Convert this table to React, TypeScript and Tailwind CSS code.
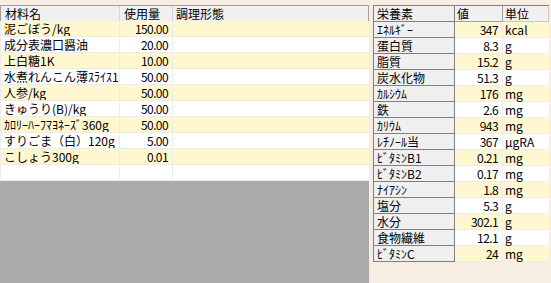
const FONT = "font-['Noto_Sans_CJK_JP','Noto_Sans',sans-serif]";

type Ingredient = { name: string; amount: string; cooking: string };
type Nutrient = { name: string; value: string; unit: string };

const ingredients: Ingredient[] = [
  { name: "泥ごぼう/kg", amount: "150.00", cooking: "" },
  { name: "成分表濃口醤油", amount: "20.00", cooking: "" },
  { name: "上白糖1K", amount: "10.00", cooking: "" },
  { name: "水煮れんこん薄ｽﾗｲｽ1k", amount: "50.00", cooking: "" },
  { name: "人参/kg", amount: "50.00", cooking: "" },
  { name: "きゅうり(B)/kg", amount: "50.00", cooking: "" },
  { name: "ｶﾛﾘｰﾊｰﾌﾏﾖﾈｰｽﾞ360g", amount: "50.00", cooking: "" },
  { name: "すりごま（白）120g", amount: "5.00", cooking: "" },
  { name: "こしょう300g", amount: "0.01", cooking: "" },
  { name: "", amount: "", cooking: "" },
];

const nutrients: Nutrient[] = [
  { name: "ｴﾈﾙｷﾞｰ", value: "347", unit: "kcal" },
  { name: "蛋白質", value: "8.3", unit: "g" },
  { name: "脂質", value: "15.2", unit: "g" },
  { name: "炭水化物", value: "51.3", unit: "g" },
  { name: "ｶﾙｼｳﾑ", value: "176", unit: "mg" },
  { name: "鉄", value: "2.6", unit: "mg" },
  { name: "ｶﾘｳﾑ", value: "943", unit: "mg" },
  { name: "ﾚﾁﾉｰﾙ当", value: "367", unit: "μgRA" },
  { name: "ﾋﾞﾀﾐﾝB1", value: "0.21", unit: "mg" },
  { name: "ﾋﾞﾀﾐﾝB2", value: "0.17", unit: "mg" },
  { name: "ﾅｲｱｼﾝ", value: "1.8", unit: "mg" },
  { name: "塩分", value: "5.3", unit: "g" },
  { name: "水分", value: "302.1", unit: "g" },
  { name: "食物繊維", value: "12.1", unit: "g" },
  { name: "ﾋﾞﾀﾐﾝC", value: "24", unit: "mg" },
];

function IngredientGrid() {
  return (
    <div className="flex h-full w-[369px] flex-col bg-[#ababab]">
      <div className="flex h-[16px] border-t border-l border-r border-[#a0a0a0] bg-[#f0f0f0] leading-[15px]">
        <div className="w-[119px] border-r border-[#d8d8d8] pl-[4px]">材料名</div>
        <div className="w-[53px] border-r border-[#d8d8d8] pl-[4px]">使用量</div>
        <div className="flex-1 pl-[3px]">調理形態</div>
      </div>
      {ingredients.map((item, index) => (
        <div
          key={index}
          className={`flex h-[16px] border-b border-l border-[#ececec] ${
            index % 2 === 0 ? "bg-[#fff7cf]" : "bg-white"
          }`}
        >
          <div className="w-[119px] overflow-hidden whitespace-nowrap border-r border-[#ececec] pl-[3px] leading-[15px]">
            {item.name}
          </div>
          <div className="w-[53px] border-r border-[#ececec] pr-[4px] text-right leading-[15px] tracking-[-0.6px]">
            {item.amount}
          </div>
          <div className="flex-1 leading-[15px]">{item.cooking}</div>
        </div>
      ))}
    </div>
  );
}

function NutrientGrid() {
  return (
    <div className="flex w-[176px] flex-col border-t border-l border-[#808080]">
      <div className="flex h-[16px] leading-[15px]">
        <div className="w-[81px] border-r border-b border-[#808080] bg-[#f0f0f0] pl-[3px]">栄養素</div>
        <div className="w-[48px] border-r border-b border-[#a0a0a0] bg-[#f0f0f0] pl-[2px]">値</div>
        <div className="flex-1 border-r border-b border-[#c8c8c8] bg-[#f0f0f0] pl-[2px]">単位</div>
      </div>
      {nutrients.map((item, index) => (
        <div key={item.name} className="flex h-[16px]">
          <div className="w-[81px] whitespace-nowrap border-r border-b border-[#808080] bg-[#f0f0f0] pl-[3px] leading-[15px]">
            {item.name}
          </div>
          <div
            className={`w-[48px] border-r border-b border-[#ececec] pr-[4px] text-right leading-[15px] tracking-[-0.6px] ${
              index % 2 === 0 ? "bg-[#fff7cf]" : "bg-white"
            }`}
          >
            {item.value}
          </div>
          <div
            className={`flex-1 border-b border-[#ececec] pl-[2px] leading-[15px] ${
              index % 2 === 0 ? "bg-[#fff7cf]" : "bg-white"
            }`}
          >
            {item.unit}
          </div>
        </div>
      ))}
    </div>
  );
}

export default function App() {
  return (
    <div
      className={`flex h-[283px] w-[551px] items-start gap-[4px] overflow-hidden bg-[#f8ede3] pt-[5px] text-[12px] leading-[16px] text-black ${FONT}`}
    >
      <div className="h-[278px]">
        <IngredientGrid />
      </div>
      <NutrientGrid />
    </div>
  );
}
